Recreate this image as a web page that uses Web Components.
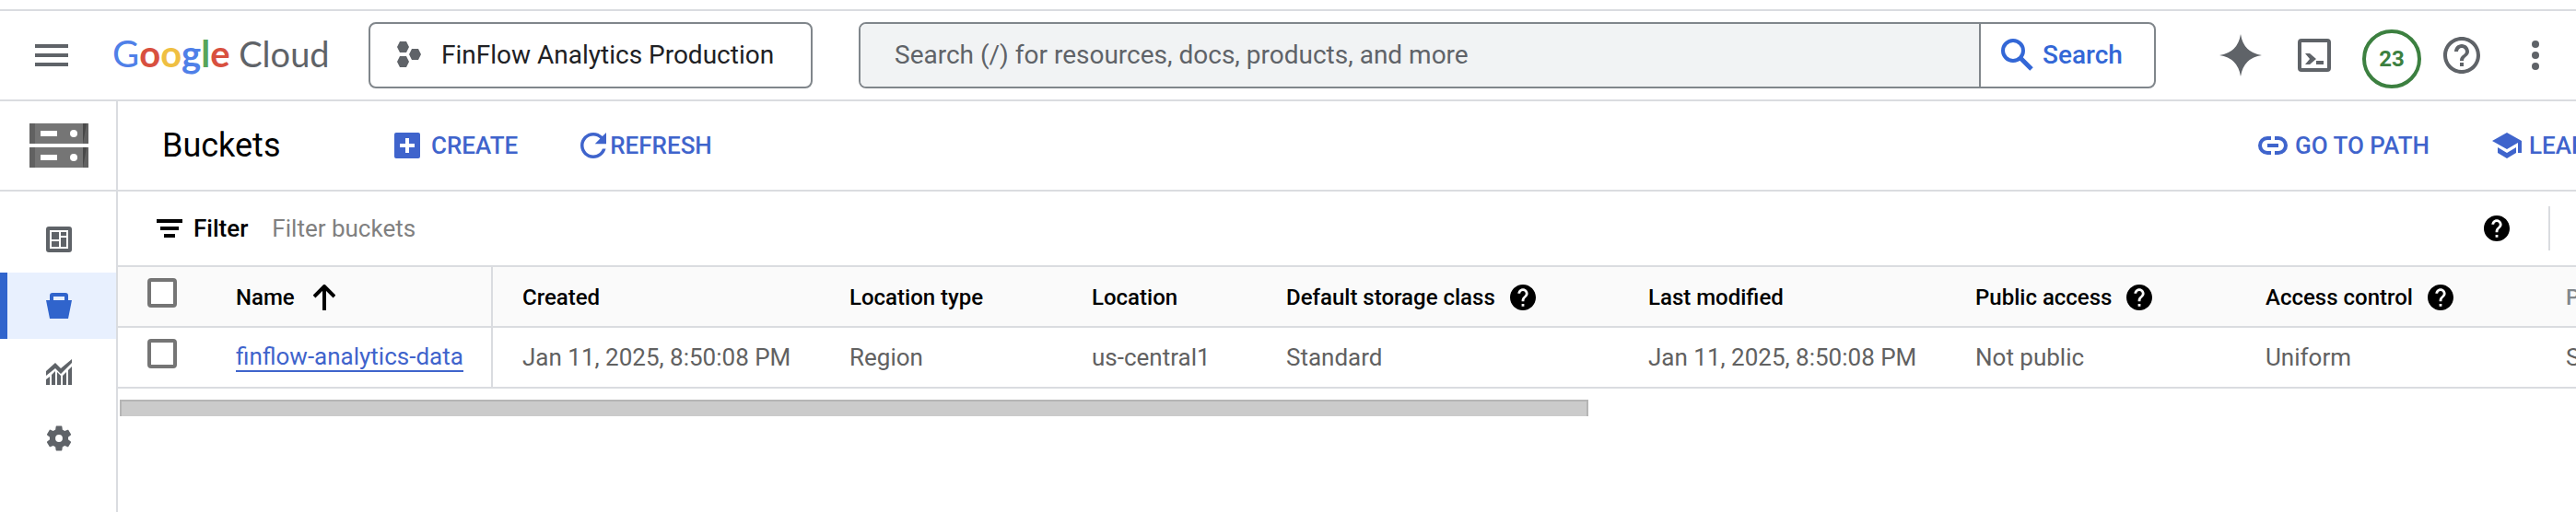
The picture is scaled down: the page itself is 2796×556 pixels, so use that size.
<!DOCTYPE html>
<html lang="en">
<head>
<meta charset="utf-8">
<title>Buckets</title>
<style>
html, body { margin: 0; height: 100%; background: #fff; overflow: hidden; }
body { font-family: Roboto, Arial, sans-serif; font-size: 26px; color: #000; }
</style>
</head>
<body>
<gc-console></gc-console>
<script>
const ICONS = {
  menu: [36, 24, '0 0 36 24', '<path d="M0 0h36v4H0zM0 10h36v4H0zM0 20h36v4H0z"/>'],
  project: [26, 28, '0 0 26 28', '<path d="M3 0h7l3 6-3 6H3L0 6zM3 16h7l3 6-3 6H3l-3-6zM16 8h7l3 6-3 6h-7l-3-6z"/>'],
  search: [35, 35, '0 0 35 35', '<circle cx="13" cy="13" r="11" fill="none" stroke="currentColor" stroke-width="4"/><path d="M21 21L33 33" stroke="currentColor" stroke-width="5"/>'],
  sparkle: [46, 46, '0 0 46 46', '<path d="M23 0Q26 20 46 23Q26 26 23 46Q20 26 0 23Q20 20 23 0z"/>'],
  shell: [36, 36, '0 0 36 36', '<rect x="2" y="2" width="32" height="32" rx="2" fill="none" stroke="currentColor" stroke-width="4"/><path d="M8 16h5l7 6-7 6H8l5-6zM20 24h8v4h-8z"/>'],
  helpOutline: [40, 40, '2 2 20 20', '<path d="M11 18h2v-2h-2v2zm1-16C6.48 2 2 6.48 2 12s4.48 10 10 10 10-4.48 10-10S17.52 2 12 2zm0 18c-4.41 0-8-3.59-8-8s3.59-8 8-8 8 3.59 8 8-3.59 8-8 8zm0-14c-2.21 0-4 1.79-4 4h2c0-1.1.9-2 2-2s2 .9 2 2c0 2-3 1.75-3 5h2c0-2.25 3-2.5 3-5 0-2.21-1.79-4-4-4z"/>'],
  help: [28, 28, '2 2 20 20', '<path d="M12 2C6.48 2 2 6.48 2 12s4.48 10 10 10 10-4.48 10-10S17.52 2 12 2zm1 17h-2v-2h2v2zm2.07-7.75l-.9.92C13.45 12.9 13 13.5 13 15h-2v-.5c0-1.1.45-2.1 1.17-2.83l1.24-1.26c.37-.36.59-.86.59-1.41 0-1.1-.9-2-2-2s-2 .9-2 2H8c0-2.21 1.79-4 4-4s4 1.79 4 4c0 .88-.36 1.68-.93 2.25z"/>'],
  more: [8, 32, '0 0 8 32', '<circle cx="4" cy="4" r="4"/><circle cx="4" cy="16" r="4"/><circle cx="4" cy="28" r="4"/>'],
  storage: [64, 48, '0 0 64 48', '<path fill="#757575" d="M0 0h64v22H0zM0 26h64v22H0z"/><path fill="#616161" d="M0 0h6v22H0zM0 26h6v22H0zM58 0h6v22h-6zM58 26h6v22h-6z"/><path fill="#484848" d="M58 0h4l-4 22zM58 26h4l-4 22z"/><path fill="#fff" d="M12 8h18v6H12zM12 34h18v6H12z"/><g fill="#fff"><circle cx="48" cy="11" r="4"/><circle cx="48" cy="37" r="4"/></g>'],
  add: [28, 28, '0 0 28 28', '<path fill-rule="evenodd" d="M2 0h24q2 0 2 2v24q0 2-2 2H2q-2 0-2-2V2q0-2 2-2zM12 6v6H6v4h6v6h4v-6h6v-4h-6V6z"/>'],
  refresh: [28, 28, '4 4 16 16', '<path d="M17.65 6.35C16.2 4.9 14.21 4 12 4c-4.42 0-7.99 3.58-7.99 8s3.57 8 7.99 8c3.73 0 6.84-2.55 7.73-6h-2.08c-.82 2.33-3.04 4-5.65 4-3.31 0-6-2.69-6-6s2.69-6 6-6c1.66 0 3.14.69 4.22 1.78L13 11h7V4l-2.35 2.35z"/>'],
  link: [32, 20, '0 0 32 20', '<path d="M14 2h-4a8 8 0 0 0 0 16h4M18 2h4a8 8 0 0 1 0 16h-4" fill="none" stroke="currentColor" stroke-width="4"/><path d="M10 8h12v4H10z"/>'],
  school: [32, 28, '0 0 32 28', '<path d="M16 0L32 9v13h-4V11L16 18 0 9zM6 16l10 6 10-6v6l-10 6-10-6z"/>'],
  filter: [28, 20, '0 0 28 20', '<path d="M0 0h28v4H0zM4 8h20v4H4zM8 16h12v4H8z"/>'],
  up: [24, 28, '0 0 24 28', '<path d="M12 28V3M1 13L12 2L23 13" fill="none" stroke="currentColor" stroke-width="4"/>'],
  dashboard: [28, 28, '0 0 28 28', '<path fill-rule="evenodd" d="M3 0h22q3 0 3 3v22q0 3-3 3H3q-3 0-3-3V3q0-3 3-3zM4 4v20h20V4z"/><path d="M6 6h8v8H6zM6 16h8v6H6zM16 6h6v4h-6zM16 12h6v10h-6z"/>'],
  bucket: [28, 28, '0 0 28 28', '<path fill-rule="evenodd" d="M0 8h4V3q0-3 3-3h14q3 0 3 3v5h4l-4 20H4zM8 4v4h12V4z"/>'],
  chart: [28, 28, '0 0 28 28', '<path d="M0 13L10 4l6 6L28 0v4L16 16l-6-6L0 18zM0 22l4-3v9H0zM6 17l4-4v15H6zM12 14l4 4v10h-4zM18 18l4-4v14h-4zM24 12l4-4v20h-4z"/>'],
  gear: [28, 28, '2 2 20 20', '<path d="M19.14 12.94c.04-.3.06-.61.06-.94 0-.32-.02-.64-.07-.94l2.03-1.58c.18-.14.23-.41.12-.61l-1.92-3.32c-.12-.22-.37-.29-.59-.22l-2.39.96c-.5-.38-1.03-.7-1.62-.94l-.36-2.54c-.04-.24-.24-.41-.48-.41h-3.84c-.24 0-.43.17-.47.41l-.36 2.54c-.59.24-1.13.57-1.62.94l-2.39-.96c-.22-.08-.47 0-.59.22L2.74 8.87c-.12.21-.08.47.12.61l2.03 1.58c-.05.3-.09.63-.09.94s.02.64.07.94l-2.03 1.58c-.18.14-.23.41-.12.61l1.92 3.32c.12.22.37.29.59.22l2.39-.96c.5.38 1.03.7 1.62.94l.36 2.54c.05.24.24.41.48.41h3.84c.24 0 .44-.17.47-.41l.36-2.54c.59-.24 1.13-.56 1.62-.94l2.39.96c.22.08.47 0 .59-.22l1.92-3.32c.12-.22.07-.47-.12-.61l-2.01-1.58zM12 14.8a2.8 2.8 0 1 1 0-5.6 2.8 2.8 0 0 1 0 5.6z"/>']
};

const RESET = `
*, *::before { box-sizing: border-box; }
button { font: inherit; color: inherit; background: none; border: 0; padding: 0; margin: 0; display: flex; align-items: center; cursor: pointer; }
`;

function define(name, css, html) {
  customElements.define(name, class extends HTMLElement {
    constructor() {
      super();
      this.attachShadow({ mode: 'open' }).innerHTML = `<style>${RESET}${css}</style>${html}`;
    }
  });
}

customElements.define('gc-icon', class extends HTMLElement {
  connectedCallback() {
    if (this.shadowRoot) return;
    const [w, h, box, body] = ICONS[this.getAttribute('name')];
    this.attachShadow({ mode: 'open' }).innerHTML =
      `<style>:host { display: block; flex: none; } svg { display: block; }</style>
       <svg width="${w}" height="${h}" viewBox="${box}" fill="currentColor" aria-hidden="true">${body}</svg>`;
  }
});

define('gc-logo', `
  :host { display: block; flex: none; width: 278px; padding-bottom: 4px; }
  a { display: block; text-decoration: none; font: 400 38px/48px Lato, sans-serif; color: #5f6368; white-space: nowrap; }
  .name { font-size: 40px; }
  .name span { font-weight: 700; }
  .name .cap { font-weight: 400; }
  .b { color: #4f80e8; } .r { color: #d8503f; } .y { color: #efbf42; } .g { color: #57a55a; }
`, `<a href="#" aria-label="Google Cloud"><span class="name"><span class="b cap">G</span><span class="r">o</span><span class="y">o</span><span class="b">g</span><span class="g">l</span><span class="r">e</span></span> Cloud</a>`);

define('gc-project-picker', `
  :host { display: block; flex: none; }
  button { min-width: 482px; height: 72px; padding: 0 29px 2px; gap: 22px; border: 2px solid #80868b; border-radius: 8px; font-size: 28px; color: #202124; white-space: nowrap; }
  gc-icon { color: #5f6368; }
`, `<button type="button"><gc-icon name="project"></gc-icon><span><slot></slot></span></button>`);

define('gc-search', `
  :host { display: block; flex: 1; min-width: 0; }
  form { display: flex; height: 72px; border: 2px solid #80868b; border-radius: 8px; overflow: hidden; }
  input { flex: 1; min-width: 0; border: 0; outline: 0; padding: 0 37px 2px; background: #f1f3f4; font: 400 28px Roboto, sans-serif; color: #202124; }
  input::placeholder { color: #5f6368; opacity: 1; }
  button { flex: none; width: 190px; padding: 0 0 2px 22px; gap: 10px; border-left: 2px solid #80868b; font-weight: 500; font-size: 28px; color: #3367d6; }
`, `<form role="search"><input type="text" aria-label="Search" placeholder="Search (/) for resources, docs, products, and more"><button type="button"><gc-icon name="search"></gc-icon>Search</button></form>`);

define('gc-header', `
  :host { display: flex; align-items: center; height: 100px; margin-top: 10px; border-top: 2px solid #dadce0; border-bottom: 2px solid #dadce0; padding: 0 40px 0 38px; color: #5f6368; }
  .menu { margin-right: 48px; }
  gc-search { margin: 0 52px 0 50px; }
  .tools { flex: none; display: grid; grid-template-columns: 80px 80px 88px 64px 52px; align-items: center; justify-items: center; }
  .tools :last-child { justify-self: end; }
  .count { width: 64px; height: 64px; margin-top: 8px; justify-content: center; border: 4px solid #3c8040; border-radius: 50%; color: #3c8040; font-weight: 700; font-size: 24px; }
`, `<button class="menu" type="button" aria-label="Main menu"><gc-icon name="menu"></gc-icon></button>
  <gc-logo></gc-logo>
  <gc-project-picker>FinFlow Analytics Production</gc-project-picker>
  <gc-search></gc-search>
  <div class="tools">
    <button type="button" aria-label="Assistant"><gc-icon name="sparkle"></gc-icon></button>
    <button type="button" aria-label="Cloud Shell"><gc-icon name="shell"></gc-icon></button>
    <button type="button" class="count">23</button>
    <button type="button" aria-label="Support"><gc-icon name="helpOutline"></gc-icon></button>
    <button type="button" aria-label="More"><gc-icon name="more"></gc-icon></button>
  </div>`);

define('gc-sidebar', `
  :host { display: block; flex: none; width: 128px; border-right: 2px solid #dadce0; color: #5f6368; }
  .service { display: flex; align-items: center; height: 98px; padding-left: 32px; border-bottom: 2px solid #dadce0; }
  nav { padding-top: 16px; }
  a { display: flex; align-items: center; height: 72px; padding-left: 50px; color: inherit; }
  a[aria-current] { padding-left: 42px; border-left: 8px solid #3064cc; background: #e8f0fe; color: #3064cc; }
`, `<div class="service"><gc-icon name="storage"></gc-icon></div>
  <nav aria-label="Cloud Storage">
    <a href="#" aria-label="Overview"><gc-icon name="dashboard"></gc-icon></a>
    <a href="#" aria-label="Buckets" aria-current="page"><gc-icon name="bucket"></gc-icon></a>
    <a href="#" aria-label="Monitoring"><gc-icon name="chart"></gc-icon></a>
    <a href="#" aria-label="Settings"><gc-icon name="gear"></gc-icon></a>
  </nav>`);

define('gc-action', `
  :host { display: block; flex: none; }
  button { gap: var(--gap, 12px); font-weight: 500; font-size: 26px; line-height: 32px; color: #3f64cc; white-space: nowrap; }
`, `<button type="button"><slot name="icon"></slot><slot></slot></button>`);

define('gc-toolbar', `
  :host { display: flex; align-items: center; height: 98px; padding-left: 48px; border-bottom: 2px solid #dadce0; overflow: hidden; }
  h1 { margin: 0; width: 252px; font-size: 36px; font-weight: 400; line-height: 48px; }
  .left { flex: 1; display: flex; gap: 68px; }
  .right { flex: none; display: flex; gap: 68px; width: 345px; --gap: 8px; }
  .tight { --gap: 4px; }
`, `<h1>Buckets</h1>
  <div class="left">
    <gc-action><gc-icon slot="icon" name="add"></gc-icon>CREATE</gc-action>
    <gc-action class="tight"><gc-icon slot="icon" name="refresh"></gc-icon>REFRESH</gc-action>
  </div>
  <div class="right">
    <gc-action><gc-icon slot="icon" name="link"></gc-icon>GO TO PATH</gc-action>
    <gc-action><gc-icon slot="icon" name="school"></gc-icon>LEARN</gc-action>
  </div>`);

define('gc-filter', `
  :host { display: flex; align-items: center; height: 80px; padding: 0 28px 0 42px; }
  label { display: flex; align-items: center; gap: 12px; font-weight: 500; }
  input { flex: 1; min-width: 0; margin-left: 26px; padding: 0; border: 0; outline: 0; background: none; font: 400 26px Roboto, sans-serif; }
  input::placeholder { color: #808080; opacity: 1; }
  .rule { width: 2px; height: 48px; margin-left: 42px; background: #dadce0; }
`, `<label for="q"><gc-icon name="filter"></gc-icon>Filter</label>
  <input id="q" type="text" placeholder="Filter buckets">
  <button type="button" aria-label="Filter help"><gc-icon name="help"></gc-icon></button>
  <div class="rule"></div>`);

define('gc-bucket-table', `
  :host { display: block; border-top: 2px solid #dadce0; overflow: hidden; }
  table { table-layout: fixed; width: 2908px; border-collapse: separate; border-spacing: 0; }
  th, td { height: 66px; padding: 0 0 0 32px; border-bottom: 2px solid #dadce0; text-align: left; white-space: nowrap; }
  th { padding-top: 2px; background: #fafafa; font-weight: 500; font-size: 24px; }
  td { color: #616161; }
  th:nth-child(2), td:nth-child(2) { border-right: 2px solid #dadce0; }
  .box { padding-top: 12px; vertical-align: top; }
  input { appearance: none; display: block; width: 32px; height: 32px; margin: 0; border: 4px solid #757575; border-radius: 4px; background: #fff; }
  .h { display: flex; align-items: center; gap: 16px; }
  .sorted { gap: 20px; }
  .muted { color: #80868b; }
  a { display: inline-block; color: #3f64cc; text-decoration: none; line-height: 30px; border-bottom: 2px solid #3f64cc; }
`, `<table>
  <colgroup><col style="width:96px"><col style="width:311px"><col style="width:355px"><col style="width:263px"><col style="width:211px"><col style="width:393px"><col style="width:355px"><col style="width:315px"><col style="width:326px"><col></colgroup>
  <thead><tr>
    <th class="box"><input type="checkbox" aria-label="Select all buckets"></th>
    <th><span class="h sorted">Name <gc-icon name="up"></gc-icon></span></th>
    <th>Created</th><th>Location type</th><th>Location</th>
    <th><span class="h">Default storage class <gc-icon name="help"></gc-icon></span></th>
    <th>Last modified</th>
    <th><span class="h">Public access <gc-icon name="help"></gc-icon></span></th>
    <th><span class="h">Access control <gc-icon name="help"></gc-icon></span></th>
    <th class="muted">Protection</th>
  </tr></thead>
  <tbody><tr>
    <td class="box"><input type="checkbox" aria-label="Select finflow-analytics-data"></td>
    <td><a href="#">finflow-analytics-data</a></td>
    <td>Jan 11, 2025, 8:50:08 PM</td><td>Region</td><td>us-central1</td><td>Standard</td>
    <td>Jan 11, 2025, 8:50:08 PM</td><td>Not public</td><td>Uniform</td><td>Soft Delete</td>
  </tr></tbody>
</table>`);

define('gc-scrollbar', `
  :host { display: flex; padding: 12px 0 0 2px; }
  .thumb { flex: 797; height: 18px; background: #cbcbcb; border: 2px solid #b5b5b5; border-bottom: 0; }
  .rest { flex: 537; }
`, `<div class="thumb"></div><div class="rest"></div>`);

define('gc-console', `
  :host { display: flex; flex-direction: column; height: 100vh; overflow: hidden; }
  gc-header { flex: none; }
  .body { flex: 1; display: flex; min-height: 0; }
  main { flex: 1; min-width: 0; }
`, `<gc-header></gc-header>
  <div class="body">
    <gc-sidebar></gc-sidebar>
    <main><gc-toolbar></gc-toolbar><gc-filter></gc-filter><gc-bucket-table></gc-bucket-table><gc-scrollbar></gc-scrollbar></main>
  </div>`);
</script>
</body>
</html>
